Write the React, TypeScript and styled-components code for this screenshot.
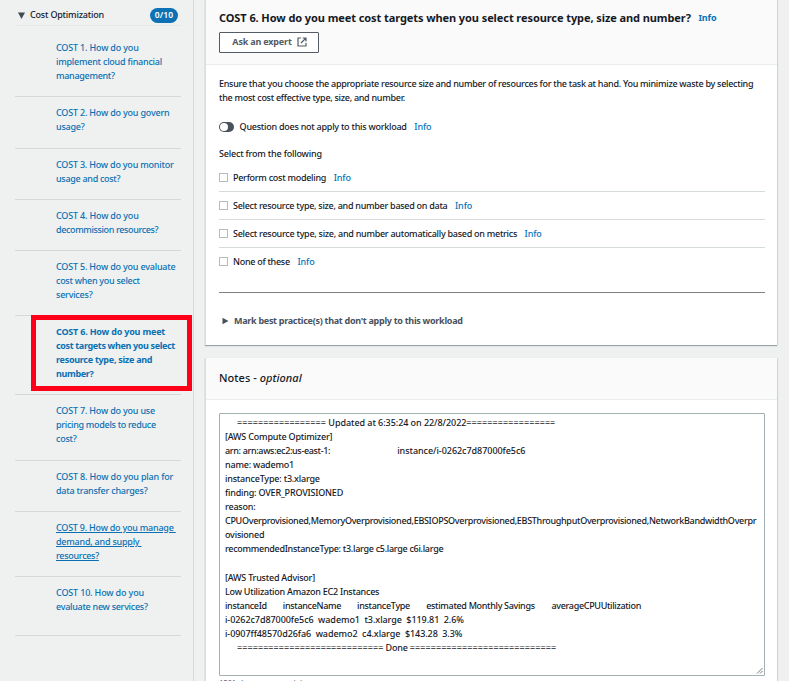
import React from 'react';
import styled, { createGlobalStyle, css } from 'styled-components';

const GlobalStyle = createGlobalStyle`
  *, *::before { box-sizing: border-box; }
  body {
    margin: 0;
    overflow: hidden;
    background: #eff1f1;
    color: #16191f;
    font: 500 9px/14px "Noto Sans", sans-serif;
    letter-spacing: -0.23px;
    font-kerning: normal;
  }
`;

const Page = styled.div`
  display: grid;
  grid-template-columns: 194px 1fr;
  height: 681px;
  overflow: hidden;
`;

/* Sidebar */
const Sidebar = styled.nav`
  padding: 5px 12px 0 15px;
  border-right: 1px solid #d5dadb;
`;

const PillarHeader = styled.div`
  display: flex;
  align-items: center;
  height: 21px;
  padding: 0 3px 0 3px;
  border-bottom: 1px solid #e4e8e8;
`;

const Caret = styled.svg`
  flex: none;
  fill: #414a55;
`;

const PillarName = styled.span`
  flex: 1;
  margin-left: 5px;
  letter-spacing: -0.2px;
`;

const Count = styled.span`
  width: 28px;
  height: 15px;
  border-radius: 8px;
  background: #0d72b5;
  color: #fff;
  font-size: 8.5px;
  font-weight: 600;
  line-height: 14px;
  letter-spacing: 0.1px;
  text-align: center;
`;

const QuestionList = styled.ul`
  margin: 0;
  padding: 0;
  list-style: none;
`;

const QuestionItem = styled.li<{ $height: number; $first?: boolean }>`
  height: ${(p) => p.$height}px;
  padding: ${(p) => (p.$first ? 15 : 9)}px 0 0 41px;
  border-bottom: 1px solid #d3d9d9;
`;

const QuestionLink = styled.a<{ $current?: boolean; $underlined?: boolean }>`
  display: block;
  color: #0a70b1;
  line-height: 14.1px;
  white-space: pre;
  text-decoration: ${(p) => (p.$underlined ? 'underline' : 'none')};
  text-underline-offset: 1px;
  ${(p) =>
    p.$current &&
    css`
      position: relative;
      font-weight: 700;
      letter-spacing: -0.35px;
      &::before {
        content: '';
        position: absolute;
        left: -25px;
        top: -10px;
        width: 161px;
        height: 76px;
        border: 5px solid #ff0019;
      }
    `}
`;

/* Main column */
const Main = styled.main`
  display: flex;
  flex-direction: column;
  gap: 13px;
  padding: 0 12px 0 11px;
`;

const Card = styled.section<{ $height: number }>`
  flex: none;
  height: ${(p) => p.$height}px;
  background: #fff;
  border-left: 1px solid #d9dddd;
  box-shadow: 0 1px 1px rgba(0, 28, 36, 0.35), 1px 0 1px rgba(0, 28, 36, 0.08);
`;

const CardHeader = styled.header<{ $height: number }>`
  height: ${(p) => p.$height}px;
  padding: 10px 12px 0 13px;
  background: #fafafa;
  border-bottom: 1px solid #ebeeee;
`;

const Title = styled.h1`
  display: flex;
  margin: 0;
  font-size: 11px;
  font-weight: 700;
  line-height: 16px;
  letter-spacing: -0.085px;
  white-space: nowrap;
`;

const NotesTitle = styled.h2`
  margin: 0;
  font-size: 11px;
  font-weight: 500;
  line-height: 20px;
  letter-spacing: 0.05px;
`;

const Info = styled.a<{ $strong?: boolean }>`
  margin-left: 7.6px;
  color: #0073bb;
  font-size: 9px;
  font-weight: ${(p) => (p.$strong ? 700 : 500)};
  letter-spacing: -0.1px;
`;

const ExpertButton = styled.button`
  display: flex;
  align-items: center;
  justify-content: center;
  gap: 5px;
  width: 100px;
  height: 21px;
  margin-top: 6px;
  padding: 0 0 1px 1px;
  border: 1px solid #545b64;
  border-radius: 1px;
  background: #fff;
  color: #545b64;
  font: 700 9px/14px "Noto Sans", sans-serif;
  letter-spacing: -0.18px;
`;

const CardBody = styled.div`
  padding: 13px 12px 0 13px;
`;

const Paragraph = styled.p`
  margin: -1px 0 0;
  line-height: 13.7px;
  white-space: pre;
  letter-spacing: -0.28px;
`;

const ToggleRow = styled.div`
  display: flex;
  align-items: center;
  height: 14px;
  margin-top: 16px;
`;

const Toggle = styled.span`
  display: flex;
  width: 15px;
  height: 10px;
  margin-right: 5.6px;
  padding: 1px;
  border-radius: 5px;
  background: #48515c;
  &::before {
    content: '';
    width: 8px;
    height: 8px;
    border-radius: 50%;
    background: #fff;
  }
`;

const Prompt = styled.div`
  margin-top: 13px;
  letter-spacing: -0.19px;
`;

const Choices = styled.div`
  margin-top: 3px;
`;

const Choice = styled.label`
  display: flex;
  align-items: center;
  height: 28px;
  border-bottom: 1px solid #d5dbdb;
  &:last-child { border-bottom-color: transparent; }
`;

const Checkbox = styled.span`
  width: 9px;
  height: 9px;
  margin-right: 5px;
  border: 1px solid #b4bdbe;
  background: #fff;
`;

const Track = styled.span<{ $track: number }>`
  letter-spacing: ${(p) => p.$track}px;
`;

const Rule = styled.hr`
  height: 1px;
  margin: 16px 0 0;
  border: 0;
  background: #7d8185;
`;

const Expander = styled.div`
  display: flex;
  align-items: center;
  gap: 5px;
  margin-top: 21px;
  padding-left: 3px;
  color: #48515c;
  font-weight: 700;
  letter-spacing: -0.285px;
`;

const NotesField = styled.div`
  position: relative;
  height: 263px;
  padding: 2px 5px;
  border: 1px solid #a3b0b2;
  border-radius: 1px;
`;

const NoteLine = styled.div<{ $track?: number; $indent?: number }>`
  height: 14.05px;
  padding-left: ${(p) => p.$indent ?? 0}px;
  line-height: 14px;
  white-space: pre;
  letter-spacing: ${(p) => p.$track ?? -0.2}px;
`;

const Gap = styled.span<{ $width: number }>`
  display: inline-block;
  width: ${(p) => p.$width}px;
`;

const Grip = styled.svg`
  position: absolute;
  right: 1px;
  bottom: 1px;
`;

const Remaining = styled.div`
  margin-top: 2px;
  color: #687078;
  font-size: 8px;
  line-height: 11px;
  letter-spacing: -0.4px;
`;

type Line = [text: string, track?: number];
type Question = { lines: Line[]; height: number; current?: boolean; underlined?: boolean };

const questions: Question[] = [
  { lines: [['COST 1. How do you', -0.18], ['implement cloud financial'], ['management?', -0.3]], height: 71 },
  { lines: [['COST 2. How do you govern', -0.2], ['usage?']], height: 52 },
  { lines: [['COST 3. How do you monitor', -0.21], ['usage and cost?', -0.3]], height: 51 },
  { lines: [['COST 4. How do you', -0.18], ['decommission resources?', -0.37]], height: 51 },
  { lines: [['COST 5. How do you evaluate', -0.2], ['cost when you select', -0.28], ['services?']], height: 65 },
  {
    lines: [['COST 6. How do you meet', -0.2], ['cost targets when you select'], ['resource type, size and', -0.28], ['number?']],
    height: 79,
    current: true,
  },
  { lines: [['COST 7. How do you use', -0.2], ['pricing models to reduce', -0.3], ['cost?']], height: 66 },
  { lines: [['COST 8. How do you plan for', -0.17], ['data transfer charges?']], height: 51 },
  { lines: [['COST 9. How do you manage '], ['demand, and supply '], ['resources?', -0.3]], height: 65, underlined: true },
  { lines: [['COST 10. How do you', -0.16], ['evaluate new services?', -0.28]], height: 59 },
];

const choices = [
  { text: 'Perform cost modeling', track: -0.27 },
  { text: 'Select resource type, size, and number based on data', track: -0.28 },
  { text: 'Select resource type, size, and number automatically based on metrics', track: -0.27 },
  { text: 'None of these', track: -0.28 },
];

export default function App() {
  return (
    <>
      <GlobalStyle />
      <Page>
        <Sidebar>
          <PillarHeader>
            <Caret width="7" height="7" viewBox="0 0 7 7"><path d="M0 .5h7L3.5 7z" /></Caret>
            <PillarName>Cost Optimization</PillarName>
            <Count>0/10</Count>
          </PillarHeader>
          <QuestionList>
            {questions.map((q, i) => (
              <QuestionItem key={i} $height={q.height} $first={i === 0}>
                <QuestionLink $current={q.current} $underlined={q.underlined}>
                  {q.lines.map(([text, track], n) => (
                    <React.Fragment key={text}>
                      {n > 0 && '\n'}
                      <Track $track={track ?? (q.current ? -0.35 : -0.23)}>{text}</Track>
                    </React.Fragment>
                  ))}
                </QuestionLink>
              </QuestionItem>
            ))}
          </QuestionList>
        </Sidebar>
        <Main>
          <Card $height={345}>
            <CardHeader $height={65}>
              <Title>
                COST 6. How do you meet cost targets when you select resource type, size and number?
                <Info $strong>Info</Info>
              </Title>
              <ExpertButton>
                Ask an expert
                <svg width="10" height="10" viewBox="0 0 10 10" fill="none" stroke="#545b64" strokeWidth="1.2">
                  <path d="M4 1H1v8h8V6M5.6 1H9v3.4M9 1 4 6" />
                </svg>
              </ExpertButton>
            </CardHeader>
            <CardBody>
              <Paragraph>
                {'Ensure that you choose the appropriate resource size and number of resources for the task at hand. You minimize waste by selecting\nthe most cost effective type, size, and number.'}
              </Paragraph>
              <ToggleRow>
                <Toggle />
                <Track $track={-0.25}>Question does not apply to this workload</Track>
                <Info>Info</Info>
              </ToggleRow>
              <Prompt>Select from the following</Prompt>
              <Choices>
                {choices.map((c) => (
                  <Choice key={c.text}>
                    <Checkbox />
                    <Track $track={c.track}>{c.text}</Track>
                    <Info>Info</Info>
                  </Choice>
                ))}
              </Choices>
              <Rule />
              <Expander>
                <svg width="7" height="8" viewBox="0 0 7 8"><path d="M.5 .8v6.4L6.5 4z" fill="#48515c" /></svg>
                Mark best practice(s) that don't apply to this workload
              </Expander>
            </CardBody>
          </Card>
          <Card $height={340}>
            <CardHeader $height={42}>
              <NotesTitle>Notes - <i>optional</i></NotesTitle>
            </CardHeader>
            <CardBody>
              <NotesField>
                <NoteLine $indent={12} $track={-0.06}>
                  <Track $track={0.09}>=================</Track> Updated at 6:35:24 on 22/8/2022<Track $track={0.09}>=================</Track>
                </NoteLine>
                <NoteLine $track={-0.2}>[AWS Compute Optimizer]</NoteLine>
                <NoteLine $track={-0.34}>arn: arn:aws:ec2:us-east-1:<Gap $width={67} /><Track $track={-0.05}>instance/i-0262c7d87000fe5c6</Track></NoteLine>
                <NoteLine>name: wademo1</NoteLine>
                <NoteLine>instanceType: t3.xlarge</NoteLine>
                <NoteLine>finding: OVER_PROVISIONED</NoteLine>
                <NoteLine>reason:</NoteLine>
                <NoteLine $track={-0.303}>CPUOverprovisioned,MemoryOverprovisioned,EBSIOPSOverprovisioned,EBSThroughputOverprovisioned,NetworkBandwidthOverpr</NoteLine>
                <NoteLine>ovisioned</NoteLine>
                <NoteLine $track={-0.29}>recommendedInstanceType: t3.large c5.large c6i.large</NoteLine>
                <NoteLine />
                <NoteLine $track={-0.22}>[AWS Trusted Advisor]</NoteLine>
                <NoteLine $track={-0.24}>Low Utilization Amazon EC2 Instances</NoteLine>
                <NoteLine $track={-0.32}>instanceId<Gap $width={16} />instanceName<Gap $width={16} />instanceType<Gap $width={16.3} />estimated Monthly Savings<Gap $width={16.7} />averageCPUUtilization</NoteLine>
                <NoteLine $track={-0.07}>{'i-0262c7d87000fe5c6  wademo1  t3.xlarge  $119.81  2.6%'}</NoteLine>
                <NoteLine $track={-0.07}>{'i-0907ff48570d26fa6  wademo2  c4.xlarge  $143.28  3.3%'}</NoteLine>
                <NoteLine $indent={12}>
                  <Track $track={0.08}>============================</Track> Done <Track $track={0.08}>============================</Track>
                </NoteLine>
                <Grip width="7" height="7" viewBox="0 0 7 7" stroke="#555" strokeWidth=".8">
                  <path d="M1 6.5 6.5 1M4 6.5 6.5 4" />
                </Grip>
              </NotesField>
              <Remaining>1561 characters remaining</Remaining>
            </CardBody>
          </Card>
        </Main>
      </Page>
    </>
  );
}
